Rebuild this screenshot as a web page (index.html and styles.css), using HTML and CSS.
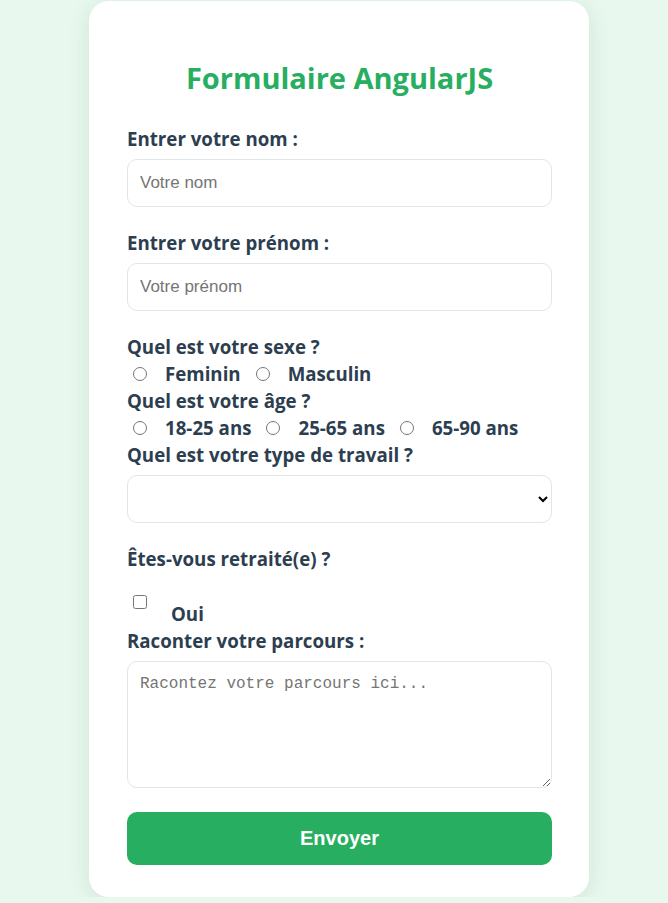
FILE: index.html
```html
<!DOCTYPE html>
<html lang="fr">
<head>
<meta charset="utf-8">
<title>Formulaire AngularJS</title>
<link rel="stylesheet" href="styles.css">
</head>
<body>
<form class="card">
  <h1 class="title">Formulaire AngularJS</h1>

  <label class="field-label" for="nom">Entrer votre nom :</label>
  <input class="text-input" id="nom" type="text" placeholder="Votre nom">

  <label class="field-label" for="prenom">Entrer votre prénom :</label>
  <input class="text-input" id="prenom" type="text" placeholder="Votre prénom">

  <div class="question">Quel est votre sexe ?</div>
  <div class="choice-row">
    <input class="radio" type="radio" name="sexe" id="f"><label class="choice" for="f">Feminin</label>
    <input class="radio" type="radio" name="sexe" id="m"><label class="choice" for="m">Masculin</label>
  </div>

  <div class="question">Quel est votre âge ?</div>
  <div class="choice-row">
    <input class="radio" type="radio" name="age" id="a1"><label class="choice" for="a1">18-25 ans</label>
    <input class="radio" type="radio" name="age" id="a2"><label class="choice" for="a2">25-65 ans</label>
    <input class="radio" type="radio" name="age" id="a3"><label class="choice" for="a3">65-90 ans</label>
  </div>

  <label class="question" for="travail">Quel est votre type de travail ?</label>
  <select class="text-input select" id="travail">
    <option value=""></option>
  </select>

  <div class="question retraite">Êtes-vous retraité(e) ?</div>
  <div class="check-row">
    <input class="checkbox" type="checkbox" id="oui"><label class="check-label" for="oui">Oui</label>
  </div>

  <label class="question" for="parcours">Raconter votre parcours :</label>
  <textarea class="text-input textarea" id="parcours" placeholder="Racontez votre parcours ici..."></textarea>

  <button class="submit" type="button">Envoyer</button>
</form>
</body>
</html>
```

FILE: styles.css
```css
html, body {
  margin: 0;
  padding: 0;
}

body {
  padding-left: 10px;
  background: #e8f8ee;
  font-family: "Open Sans", "Noto Sans", sans-serif;
  color: #2c3e50;
}

.card {
  box-sizing: border-box;
  width: 500px;
  margin: 1px auto 0;
  padding: 57px 37px 32px 38px;
  background: #ffffff;
  border-radius: 20px;
  box-shadow: 0 4px 22px rgba(40, 90, 60, 0.12);
  display: flex;
  flex-direction: column;
}

.title {
  margin: 0 0 27px;
  text-align: center;
  color: #27ae60;
  font-size: 29px;
  line-height: 40px;
  font-weight: 700;
}

.field-label,
.question {
  display: block;
  font-size: 18.7px;
  line-height: 27px;
  font-weight: 700;
  color: #2c3e50;
}

.field-label {
  margin-bottom: 7px;
}

label.question {
  margin-bottom: 7px;
}

.text-input {
  box-sizing: border-box;
  width: 100%;
  height: 48px;
  margin: 0 0 22px;
  padding: 0 12px;
  border: 1px solid #dfe6e9;
  border-radius: 10px;
  background: #ffffff;
  font-family: "Liberation Sans", Arial, sans-serif;
  font-size: 17px;
  color: #2c3e50;
  outline: none;
}

.text-input::placeholder {
  color: #757575;
}

.select {
  color: #000;
}

.choice-row {
  display: flex;
  align-items: center;
  height: 27px;
}

.radio {
  width: 14px;
  height: 14px;
  margin: 0 18px 0 6px;
  flex: none;
}

.choice {
  font-size: 18.7px;
  line-height: 27px;
  font-weight: 700;
  color: #2c3e50;
  margin-right: 9px;
}

.retraite {
  margin-bottom: 20px;
}

.check-row {
  display: flex;
  align-items: flex-start;
}

.checkbox {
  width: 14px;
  height: 14px;
  margin: 3px 0 0 6px;
  flex: none;
}

.check-label {
  margin: 8px 0 0 24px;
  font-size: 18.7px;
  line-height: 27px;
  font-weight: 700;
  color: #2c3e50;
}

.textarea {
  height: 127px;
  padding: 12px 12px;
  resize: vertical;
  font-family: "Liberation Mono", monospace;
  font-size: 16px;
  line-height: 20px;
  margin-bottom: 24px;
}

.submit {
  height: 53px;
  width: 100%;
  border: none;
  border-radius: 10px;
  background: #27ae60;
  color: #ffffff;
  font-family: "Liberation Sans", Arial, sans-serif;
  font-size: 20px;
  font-weight: 700;
  cursor: pointer;
}
```
